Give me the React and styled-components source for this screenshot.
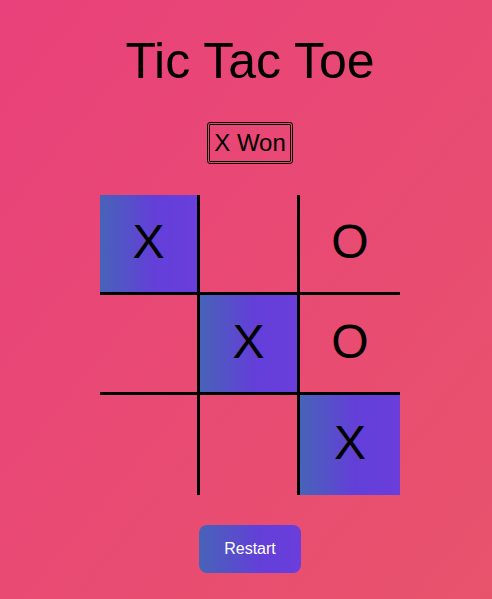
import React from 'react';
import styled, { createGlobalStyle } from 'styled-components';

const GlobalStyle = createGlobalStyle`
  html, body {
    margin: 0;
    padding: 0;
  }
  body {
    min-height: 100vh;
    font-family: "Liberation Sans", Arial, sans-serif;
    background: linear-gradient(to bottom right, #e9417b, #e8536c);
  }
`;

const Page = styled.div`
  display: flex;
  flex-direction: column;
  align-items: center;
  padding: 32px 0 0 8px;
  min-height: 100vh;
  box-sizing: border-box;
`;

const Title = styled.h1`
  margin: 0;
  font-size: 50px;
  font-weight: normal;
  color: #000;
`;

const Status = styled.div`
  margin-top: 32px;
  padding: 4px;
  border: 3px double #000;
  border-radius: 3px;
  font-size: 24px;
  color: #000;
`;

const Board = styled.div`
  margin-top: 31px;
  display: grid;
  grid-template-columns: repeat(3, 100px);
  grid-template-rows: repeat(3, 100px);
`;

const Cell = styled.div`
  box-sizing: border-box;
  display: flex;
  align-items: center;
  justify-content: center;
  padding-bottom: 5px;
  font-size: 48px;
  color: #000;
  border-right: ${(p) => (p.col < 2 ? '3px solid #000' : 'none')};
  border-bottom: ${(p) => (p.row < 2 ? '3px solid #000' : 'none')};
  background: ${(p) => (p.win
    ? 'linear-gradient(90deg, #4763b8 0%, #633fd8 55%, #6a3edb 100%)'
    : 'transparent')};
`;

const RestartButton = styled.button`
  margin-top: 30px;
  padding: 15px 25px;
  border: none;
  border-radius: 8px;
  font-family: "Liberation Sans", Arial, sans-serif;
  font-size: 16px;
  color: #fff;
  background: linear-gradient(90deg, #4763b8 0%, #633fd8 60%, #6a3edb 100%);
  cursor: pointer;
`;

const squares = ['X', '', 'O', '', 'X', 'O', '', '', 'X'];
const winLine = [0, 4, 8];

const App = () => (
  <>
    <GlobalStyle />
    <Page>
      <Title>Tic Tac Toe</Title>
      <Status>X Won</Status>
      <Board>
        {squares.map((value, i) => (
          <Cell
            key={i}
            row={Math.floor(i / 3)}
            col={i % 3}
            win={winLine.includes(i)}
          >
            {value}
          </Cell>
        ))}
      </Board>
      <RestartButton type="button">Restart</RestartButton>
    </Page>
  </>
);

export default App;
